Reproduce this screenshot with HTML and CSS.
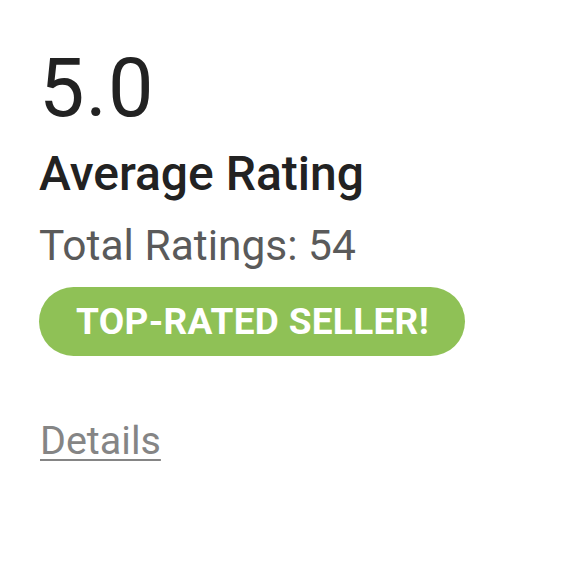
FILE: index.html
```html
<!DOCTYPE html>
<html lang="en">
<head>
  <meta charset="UTF-8">
  <title>Seller rating</title>
  <meta name="viewport" content="width=device-width, initial-scale=1.0">
  <link rel="stylesheet" href="styles.css">
</head>
<body>

  <!-- rating summary -->
  <div class="rating-card">
    <div class="score">5.0</div>
    <h2 class="score-label">Average Rating</h2>
    <div class="total">Total Ratings: 54</div>
    <div class="badge-row">
      <span class="badge">TOP-RATED SELLER!</span>
    </div>
    <a class="details-link" href="#">Details</a>
  </div>

</body>
</html>
```

FILE: styles.css
```css
/* ==== Reset & Base ==== */
* { margin:0; padding:0; box-sizing:border-box; }
html, body { height:100%; width:100%; overflow:hidden; }

body {
  font-family: Roboto, "Liberation Sans", sans-serif;
  background:#fff;
  color:#222;
}

/* ==== card ==== */
.rating-card {
  display:flex; flex-direction:column; align-items:flex-start;
  padding:49px 0 0 39px;
}

.score { font-size:81px; line-height:80px; color:#222; letter-spacing:1px; }

.score-label {
  margin-top:17px;
  font-size:48px; line-height:55px; font-weight:500; color:#222;
}

.total {
  margin-top:20px;
  font-size:42.5px; line-height:50px; color:#5a5a5a;
}

/* ==== badge ==== */
.badge-row { margin-top:16px; }
.badge {
  display:inline-flex; align-items:center;
  height:69px; padding:0 36px 0 37px;
  background:#8fc156; color:#fff;
  border-radius:35px;
  font-size:37px; font-weight:700; letter-spacing:0.3px;
}

/* ==== link ==== */
.details-link {
  margin-top:61px; margin-left:1px;
  font-size:39.5px; line-height:48px;
  color:#858585; text-decoration:underline;
  text-decoration-thickness:2px;
  text-underline-offset:5px;
}
```
